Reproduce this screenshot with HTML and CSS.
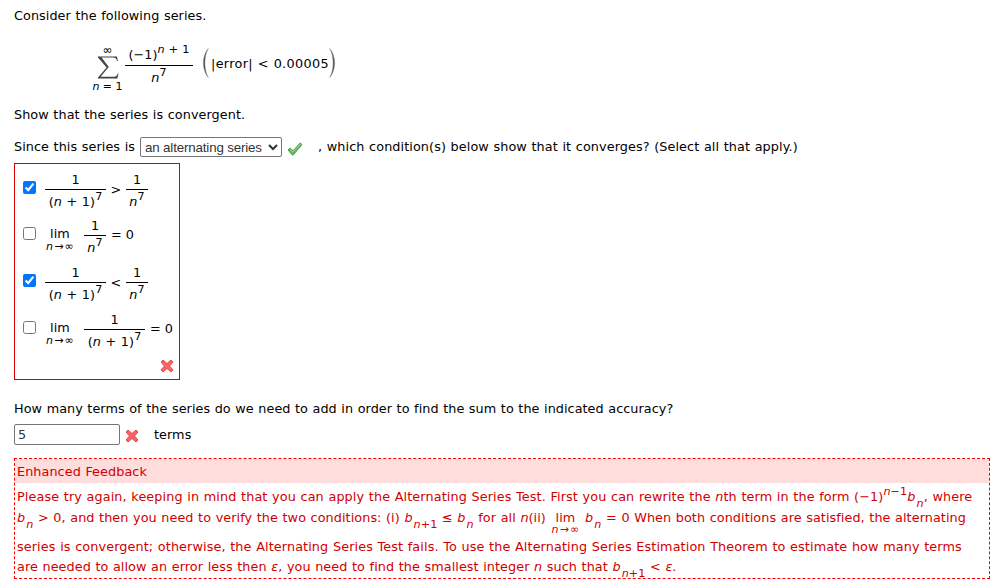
FILE: index.html
```html
<!DOCTYPE html>
<html lang="en">
<head>
  <meta charset="UTF-8">
  <meta name="viewport" content="width=device-width, initial-scale=1.0">
  <title>Alternating Series</title>
  <link rel="stylesheet" href="styles.css">
</head>
<body>
  <p class="line">Consider the following series.</p>

  <!-- Series -->
  <div class="series">
    <div class="sum">
      <span class="sum-top">∞</span>
      <svg class="sigma" width="22" height="24" viewBox="0 0 22 24">
        <path d="M0.8 0.5H20L20.8 5H20C19.4 2.5 18.4 1.6 15.5 1.6H4.6L11.8 11L3.6 20.8H15.8C18.6 20.8 19.8 20 20.8 17.4L21.5 17.6L20.3 22.6H0.8V21.8L9.6 11.6L0.8 1.2Z" fill="#444"/>
      </svg>
      <span class="sum-bottom"><i>n</i> = 1</span>
    </div>
    <div class="frac frac-main">
      <span class="num">(−1)<sup><i>n</i> + 1</sup></span>
      <span class="den"><i>n</i><sup>7</sup></span>
    </div>
    <svg class="paren" width="7" height="30" viewBox="0 0 7 30"><path d="M6.3 0.5C-0.3 8 -0.3 22 6.3 29.5C1.8 22 1.8 8 6.3 0.5Z" fill="#555" stroke="#777" stroke-width="0.4"/></svg>
    <span class="error">|error| &lt; 0.00005</span>
    <svg class="paren" width="7" height="30" viewBox="0 0 7 30"><path d="M0.7 0.5C7.3 8 7.3 22 0.7 29.5C5.2 22 5.2 8 0.7 0.5Z" fill="#555" stroke="#777" stroke-width="0.4"/></svg>
  </div>

  <p class="line show">Show that the series is convergent.</p>

  <div class="since">
    <span class="since-label">Since this series is</span>
    <select class="type">
      <option>an alternating series</option>
    </select>
    <svg class="check" width="16" height="14" viewBox="0 0 16 14"><path d="M1 8L3.2 6L6 8.8L13.2 1L15 2.6L6.2 13H5.4Z" fill="#64b964" stroke="#419241" stroke-width="0.9"/><path d="M3 7.5L6 10L13.5 2" fill="none" stroke="#a0dc9c" stroke-width="0.8"/></svg>
    <span class="since-rest">, which condition(s) below show that it converges? (Select all that apply.)</span>
  </div>

  <!-- Conditions -->
  <div class="choices">
    <label class="choice">
      <input type="checkbox" checked>
      <span class="frac wide"><span class="num">1</span><span class="den">(<i>n</i> + 1)<sup>7</sup></span></span>
      <span class="rel">&gt;</span>
      <span class="frac narrow"><span class="num">1</span><span class="den"><i>n</i><sup>7</sup></span></span>
    </label>
    <label class="choice">
      <input type="checkbox">
      <span class="lim"><span>lim</span><small><i>n</i>→∞</small></span>
      <span class="frac narrow"><span class="num">1</span><span class="den"><i>n</i><sup>7</sup></span></span>
      <span class="equals">= 0</span>
    </label>
    <label class="choice">
      <input type="checkbox" checked>
      <span class="frac wide"><span class="num">1</span><span class="den">(<i>n</i> + 1)<sup>7</sup></span></span>
      <span class="rel">&lt;</span>
      <span class="frac narrow"><span class="num">1</span><span class="den"><i>n</i><sup>7</sup></span></span>
    </label>
    <label class="choice">
      <input type="checkbox">
      <span class="lim"><span>lim</span><small><i>n</i>→∞</small></span>
      <span class="frac wide"><span class="num">1</span><span class="den">(<i>n</i> + 1)<sup>7</sup></span></span>
      <span class="equals">= 0</span>
    </label>
    <svg class="cross" width="14" height="14" viewBox="0 0 14 14"><path d="M1 3L3 1L7 4.5L11 1L13 3L9.5 7L13 11L11 13L7 9.5L3 13L1 11L4.5 7Z" fill="#fa6464" stroke="#e04a4a"/></svg>
  </div>

  <p class="line question">How many terms of the series do we need to add in order to find the sum to the indicated accuracy?</p>
  <div class="answer">
    <input class="terms" type="text" value="5">
    <svg class="cross" width="14" height="14" viewBox="0 0 14 14"><path d="M1 3L3 1L7 4.5L11 1L13 3L9.5 7L13 11L11 13L7 9.5L3 13L1 11L4.5 7Z" fill="#fa6464" stroke="#e04a4a"/></svg>
    <span>terms</span>
  </div>

  <!-- Feedback -->
  <div class="feedback">
    <div class="feedback-title">Enhanced Feedback</div>
    <div class="feedback-body">
      <p class="f1">Please try again, keeping in mind that you can apply the Alternating Series Test. First you can rewrite the <i>n</i>th term in the form (−1)<sup><i>n</i>−1</sup><i>b</i><sub><i>n</i></sub>, where</p>
      <p class="f2"><i>b</i><sub><i>n</i></sub> &gt; 0, and then you need to verify the two conditions: (i) <i>b</i><sub><i>n</i>+1</sub> ≤ <i>b</i><sub><i>n</i></sub> for all <i>n</i>(ii) <span class="lim"><span>lim</span><small><i>n</i>→∞</small></span> <i>b</i><sub><i>n</i></sub> = 0 When both conditions are satisfied, the alternating</p>
      <p class="f3">series is convergent; otherwise, the Alternating Series Test fails. To use the Alternating Series Estimation Theorem to estimate how many terms</p>
      <p class="f4">are needed to allow an error less then <i>ε</i>, you need to find the smallest integer <i>n</i> such that <i>b</i><sub><i>n</i>+1</sub> &lt; <i>ε</i>.</p>
    </div>
  </div>
</body>
</html>
```
FILE: styles.css
```css
* {
  box-sizing: border-box;
}
body {
  margin: 0;
  padding: 6px 14px 0;
  background: #fff;
  color: #000;
  font-family: Verdana, "DejaVu Sans", sans-serif;
  font-size: 12.8px;
  line-height: 20px;
  letter-spacing: 0.066px;
  word-spacing: 0.44px;
}
p {
  margin: 0;
  white-space: nowrap;
}
svg {
  display: block;
  flex: none;
}
sup, sub {
  font-size: 11.2px;
  line-height: 0;
}
sup {
  vertical-align: 6px;
}
sub {
  vertical-align: -6px;
  margin-left: 1px;
}

.series {
  display: flex;
  align-items: flex-start;
  height: 57px;
  margin: 16px 0 6px 78px;
  white-space: nowrap;
}
.sum {
  display: flex;
  flex-direction: column;
  align-items: center;
  width: 31px;
}
.sum-top {
  height: 14px;
  line-height: 16px;
  font-size: 12px;
}
.sum-bottom {
  font-size: 11px;
  line-height: 13px;
  letter-spacing: 0;
  word-spacing: 0;
}
.frac {
  display: flex;
  flex-direction: column;
  text-align: center;
  white-space: nowrap;
}
.num {
  height: 20px;
  border-bottom: 1px solid #000;
}
.frac-main {
  width: 68px;
  margin: 0 9px 0 2px;
}
.frac-main .num {
  height: 24px;
  line-height: 25px;
}
.frac-main .den {
  line-height: 24px;
}
.series .paren {
  margin-top: 6px;
}
.error {
  width: 120px;
  line-height: 43px;
  padding-left: 2px;
  letter-spacing: 0.33px;
}

.since {
  display: flex;
  align-items: center;
  height: 22px;
  margin-top: 11px;
  white-space: nowrap;
}
.since-label {
  width: 126px;
}
.since-rest {
  letter-spacing: 0.09px;
}
.type {
  width: 142px;
  height: 20px;
  padding: 0;
  border: 1px solid #767676;
  border-radius: 2px;
  background: #fff;
  color: #333;
  font: 13.33px "Liberation Sans", Arial, sans-serif;
  letter-spacing: -0.15px;
  word-spacing: 0;
}
.check {
  margin: 4px 15px 0 5px;
}

.choices {
  width: 166px;
  height: 217px;
  margin-top: 5px;
  padding: 6px 5px 0 8px;
  border: 1px solid #d80000;
}
.choice {
  display: flex;
  height: 47px;
}
.choice:first-child {
  height: 46px;
}
.choice input {
  width: 13px;
  height: 13px;
  margin: 11px 9px 0 0;
}
.wide {
  width: 61px;
}
.narrow {
  width: 22px;
}
.choice .den {
  line-height: 24px;
}
.rel {
  width: 20px;
  text-align: center;
  line-height: 39px;
}
.equals {
  padding-left: 5px;
  line-height: 38px;
  letter-spacing: -0.2px;
}
.lim {
  display: inline-flex;
  flex-direction: column;
  align-items: center;
  width: 30px;
}
.lim small {
  font-size: 11px;
  line-height: 12px;
  letter-spacing: 1.2px;
  margin-right: -1px;
}
.choice .lim {
  margin-right: 9px;
  padding-top: 8px;
}
.choice .lim small {
  margin-top: -3px;
}
.choices .cross {
  margin: 2px 0 0 auto;
}

.question {
  margin-top: 19px;
  letter-spacing: 0.05px;
}
.answer {
  display: flex;
  align-items: center;
  height: 21px;
  margin-top: 5px;
}
.terms {
  width: 106px;
  height: 21px;
  padding: 1px 3px;
  border: 1px solid #767676;
  border-radius: 2px;
  color: #333;
  font: 12.8px Verdana, "DejaVu Sans", sans-serif;
}
.answer .cross {
  margin: 3px 15px 0 5px;
}

.feedback {
  width: 976px;
  height: 121px;
  margin-top: 13px;
  border: 1px dashed #f00;
  color: #d00000;
}
.feedback-title {
  height: 24px;
  padding-left: 2px;
  background: #fdd;
  line-height: 25px;
}
.feedback-body {
  padding: 4px 0 0 2px;
}
.f1 {
  height: 21px;
  letter-spacing: 0.105px;
}
.f2 {
  height: 29px;
}
.f2 .lim {
  vertical-align: baseline;
  height: 20px;
}
.f2 .lim small {
  margin-top: -4px;
}
.f3 {
  letter-spacing: 0.105px;
}
```
